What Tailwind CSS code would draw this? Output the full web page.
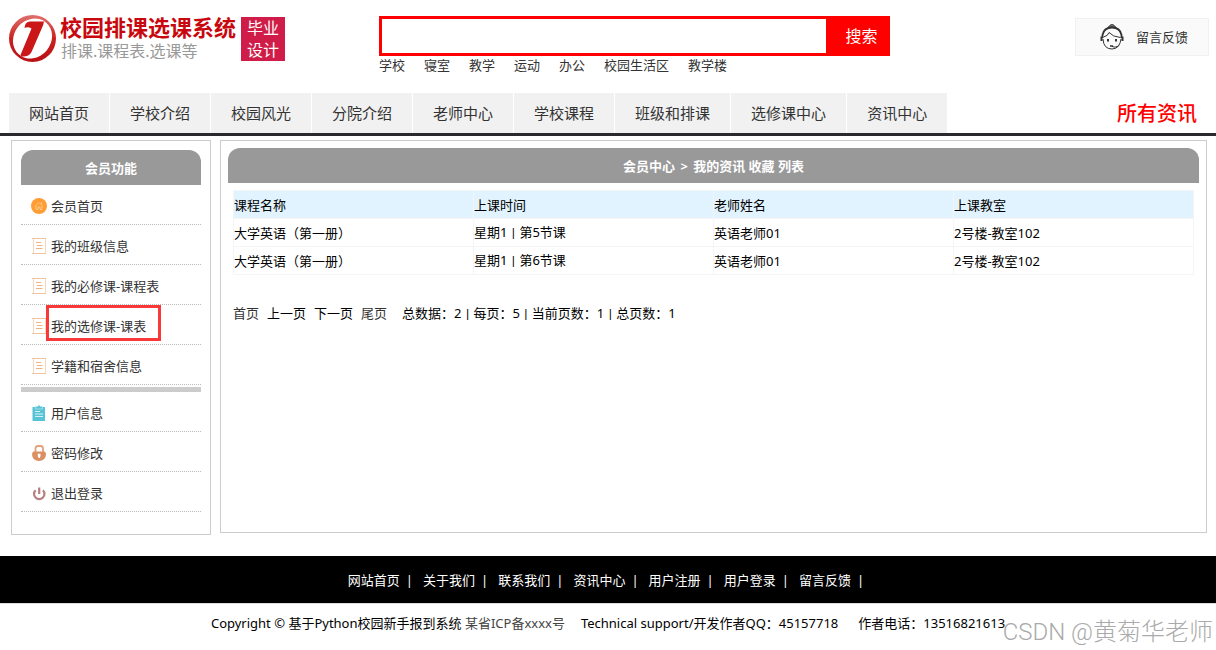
<!DOCTYPE html>
<html lang="zh-CN">
<head>
  <meta charset="UTF-8" />
  <meta name="viewport" content="width=device-width, initial-scale=1" />
  <title>校园排课选课系统 - 会员中心</title>
  <script src="https://cdn.jsdelivr.net/npm/@tailwindcss/browser@4"></script>
  <style>
    body {
      font-family: 'Noto Sans', 'Noto Sans CJK SC', sans-serif;
    }
  </style>
</head>
<body class="relative min-h-screen bg-white text-[13px] leading-5 text-black">
  <!-- Shared sidebar icon -->
  <svg class="hidden">
    <symbol id="icon-list" viewBox="0 0 16 16">
      <path d="M2.500 1V15M14.500 1V15" stroke="#f8d8ba" fill="none" />
      <path d="M1 .5H15M1 15.500H15" stroke="#efc49c" fill="none" />
      <path d="M5 4.500H10M6 7.500H11.500M5 10.500H11.500" stroke="#efb27e" fill="none" />
    </symbol>
  </svg>

  <header>
    <div class="flex h-[93px] items-start pl-[9px] pr-[7px]">
      <a href="#" class="mt-[14px] flex w-[370px] shrink-0" aria-label="校园排课选课系统">
        <svg class="mt-px h-12 w-12" viewBox="0 0 48 48">
          <defs>
            <linearGradient id="ring" x1="0" y1="0" x2="0" y2="1">
              <stop offset="0" stop-color="#e0706c" />
              <stop offset=".5" stop-color="#c9211f" />
              <stop offset="1" stop-color="#b91014" />
            </linearGradient>
          </defs>
          <circle cx="23.500" cy="23.500" r="23.500" fill="url(#ring)" />
          <ellipse cx="23.500" cy="23.500" rx="21" ry="18.500" transform="rotate(-50 23.500 23.500)" fill="#fff" />
          <path d="M15.500 13Q16 6.500 21 6.500H35Q34.500 10 32.500 14L22.500 37Q20 42 12.500 41.500L11.500 40L22.500 13.500Q19 11.500 15.500 13Z" fill="#cc1719" />
        </svg>
        <span class="ml-[3px] block">
          <span class="block text-[22px] font-bold leading-[26px] text-[#c8080e]">校园排课选课系统</span>
          <span class="block pl-px text-base leading-[22px] text-[#999]">排课.课程表.选课等</span>
        </span>
        <span class="ml-[5px] mt-[3px] h-11 w-11 bg-[#d01c48] text-center text-base leading-[22px] text-white">毕业<br />设计</span>
      </a>
      <div class="mt-4 w-[511px]">
        <form class="flex h-10">
          <input type="text" aria-label="搜索" class="min-w-0 flex-1 border-[3px] border-[#f00] px-2 outline-none" />
          <button type="button" class="w-[61px] bg-[#f00] pl-1 text-base text-white">搜索</button>
        </form>
        <nav class="flex gap-[19px] leading-[18px] text-[#333]">
          <a href="#">学校</a>
          <a href="#">寝室</a>
          <a href="#">教学</a>
          <a href="#">运动</a>
          <a href="#">办公</a>
          <a href="#">校园生活区</a>
          <a href="#">教学楼</a>
        </nav>
      </div>
      <a href="#" class="ml-auto mt-[18px] flex h-[38px] w-[134px] items-center border border-[#f1f1f1] bg-[#fafafa] pl-6 text-[#333]">
        <svg class="mr-3 h-[26px] w-6" viewBox="0 0 24 26" fill="none" stroke="#333">
          <path d="M8 3.500Q12 -2.500 16 3.500Q12 2 8 3.500Z" fill="#888" />
          <path d="M2.500 14V11Q4 3.500 12 3.500T21.500 11V14" stroke-width="1.800" />
          <path d="M3 15Q3.500 25 12 25Q16 25 18.500 22M21 15Q20.500 19 18.500 22Q15 24 12 22.500" />
          <path d="M3.500 13Q8 12 9 8.500Q13 13 20.500 13.500" />
          <path d="M1.500 12.500V17M22.500 12.500V17" stroke-width="2" />
          <path d="M8 15V17.500M16 15V17.500" stroke-width="2" />
          <path d="M10 22H13" stroke-width="1.500" />
        </svg>
        留言反馈
      </a>
    </div>
    <div class="flex h-[43px] justify-between border-b-[3px] border-[#2a2a2c] pl-[9px] pr-[19px]">
      <nav class="flex gap-px text-[15px] leading-10 text-[#333]">
        <a href="#" class="bg-[#f1f1f1] px-5">网站首页</a>
        <a href="#" class="bg-[#f1f1f1] px-5">学校介绍</a>
        <a href="#" class="bg-[#f1f1f1] px-5">校园风光</a>
        <a href="#" class="bg-[#f1f1f1] px-5">分院介绍</a>
        <a href="#" class="bg-[#f1f1f1] px-5">老师中心</a>
        <a href="#" class="bg-[#f1f1f1] px-5">学校课程</a>
        <a href="#" class="bg-[#f1f1f1] px-5">班级和排课</a>
        <a href="#" class="bg-[#f1f1f1] px-5">选修课中心</a>
        <a href="#" class="bg-[#f1f1f1] px-5">资讯中心</a>
      </nav>
      <a href="#" class="text-xl font-medium leading-[42px] text-[#f00]">所有资讯</a>
    </div>
  </header>

  <main class="flex items-start gap-[9px] pb-[21px] pl-[11px] pr-[9px] pt-1">
    <aside class="w-[200px] shrink-0 border border-[#ccc] px-[9px] pb-[22px] pt-[9px]">
      <h2 class="h-[35px] rounded-t-xl bg-[#999] text-center font-bold leading-9 text-white">会员功能</h2>
      <ul class="text-[#333]">
        <li class="h-10 border-b border-dotted border-[#bbb]">
          <a href="#" class="flex h-full items-center gap-1 pl-[10px] pt-0.5">
            <svg class="h-4 w-4" viewBox="0 0 16 16">
              <circle cx="8" cy="8" r="8" fill="#ff9c33" />
              <path d="M4 8.500L8 4.500L11.500 8M5 8V11.500H7V9H9V11.500H11V8M10.500 4V6" fill="none" stroke="#ffc888" />
            </svg>
            会员首页
          </a>
        </li>
        <li class="h-10 border-b border-dotted border-[#bbb]">
          <a href="#" class="flex h-full items-center gap-1 pl-[10px] pt-0.5">
            <svg class="h-4 w-4"><use href="#icon-list" /></svg>
            我的班级信息
          </a>
        </li>
        <li class="h-10 border-b border-dotted border-[#bbb]">
          <a href="#" class="flex h-full items-center gap-1 pl-[10px] pt-0.5">
            <svg class="h-4 w-4"><use href="#icon-list" /></svg>
            我的必修课-课程表
          </a>
        </li>
        <li class="relative h-10 border-b border-dotted border-[#bbb]">
          <a href="#" class="flex h-full items-center gap-1 pl-[10px] pt-0.5">
            <svg class="h-4 w-4"><use href="#icon-list" /></svg>
            我的选修课-课表
          </a>
          <span class="pointer-events-none absolute left-[25px] top-0 h-9 w-[115px] border-[3px] border-[#f93939]"></span>
        </li>
        <li class="h-10 border-b border-dotted border-[#bbb]">
          <a href="#" class="flex h-full items-center gap-1 pl-[10px] pt-0.5">
            <svg class="h-4 w-4"><use href="#icon-list" /></svg>
            学籍和宿舍信息
          </a>
        </li>
      </ul>
      <ul class="mt-0.5 border-t-[5px] border-[#ccc] text-[#333]">
        <li class="h-10 border-b border-dotted border-[#bbb]">
          <a href="#" class="flex h-full items-center gap-1 pl-[10px] pt-0.5">
            <svg class="h-4 w-4" viewBox="0 0 16 16">
              <path d="M1.500 2H14V16H1.500Z" fill="#56c3d6" />
              <path d="M4.500 4V1.500H6.500Q8 -1 9.500 1.500H11.500V4Z" fill="#56c3d6" stroke="#bfe8ef" stroke-width=".7" />
              <path d="M4 6.500H9M4 9H12M4 11.500H12" stroke="#d5f1f5" fill="none" />
            </svg>
            用户信息
          </a>
        </li>
        <li class="h-10 border-b border-dotted border-[#bbb]">
          <a href="#" class="flex h-full items-center gap-1 pl-[10px] pt-0.5">
            <svg class="h-4 w-4" viewBox="0 0 16 16">
              <path d="M4.500 8V3.500Q4.500 1 7 1H9.500Q12 1 12 3.500V8" fill="none" stroke="#e2a27c" stroke-width="1.800" />
              <path d="M2.500 6.500H13.500Q15 7 15 9.500Q14.500 16 8 16T1 9.500Q1 7 2.500 6.500Z" fill="#dd8f64" />
              <path d="M6.800 8.800H9.500V11L8.800 13H7.600L6.800 11Z" fill="#fff" />
            </svg>
            密码修改
          </a>
        </li>
        <li class="h-10 border-b border-dotted border-[#bbb]">
          <a href="#" class="flex h-full items-center gap-1 pl-[10px] pt-0.5">
            <svg class="h-4 w-4" viewBox="0 0 16 16" fill="none" stroke="#b57f80" stroke-width="2.200">
              <path d="M4.600 5.200A5.200 5.200 0 1 0 11.900 5.200M8.200 2.500V9" />
            </svg>
            退出登录
          </a>
        </li>
      </ul>
    </aside>

    <section class="min-h-[393px] min-w-0 flex-1 border border-[#ccc] p-[7px]">
      <h1 class="h-[35px] rounded-t-xl bg-[#999] text-center font-bold leading-9 text-white">会员中心 <span class="px-0.5">&gt;</span> 我的资讯 收藏 列表</h1>
      <div class="px-[5px] pt-[7px]">
        <table class="w-full table-fixed border-collapse text-left">
          <thead>
            <tr class="h-7 bg-[#e1f3ff]">
              <th class="border border-[#f5f5f5] p-0 font-normal">课程名称</th>
              <th class="border border-[#f5f5f5] p-0 font-normal">上课时间</th>
              <th class="border border-[#f5f5f5] p-0 font-normal">老师姓名</th>
              <th class="border border-[#f5f5f5] p-0 font-normal">上课教室</th>
            </tr>
          </thead>
          <tbody>
            <tr class="h-7">
              <td class="border border-[#f5f5f5] p-0">大学英语（第一册）</td>
              <td class="border border-[#f5f5f5] p-0">星期1 <span class="px-px font-[Roboto]">|</span> 第5节课</td>
              <td class="border border-[#f5f5f5] p-0">英语老师01</td>
              <td class="border border-[#f5f5f5] p-0">2号楼-教室102</td>
            </tr>
            <tr class="h-7">
              <td class="border border-[#f5f5f5] p-0">大学英语（第一册）</td>
              <td class="border border-[#f5f5f5] p-0">星期1 <span class="px-px font-[Roboto]">|</span> 第6节课</td>
              <td class="border border-[#f5f5f5] p-0">英语老师01</td>
              <td class="border border-[#f5f5f5] p-0">2号楼-教室102</td>
            </tr>
          </tbody>
        </table>
        <div class="mt-7 flex gap-2">
          <a href="#" class="text-[#333]">首页</a>
          <span>上一页</span>
          <span>下一页</span>
          <a href="#" class="text-[#333]">尾页</a>
          <span class="ml-[7px]">总数据：2 <span class="px-px font-[Roboto]">|</span> 每页：5 <span class="px-px font-[Roboto]">|</span> 当前页数：1 <span class="px-px font-[Roboto]">|</span> 总页数：1</span>
        </div>
      </div>
    </section>
  </main>

  <footer>
    <nav class="flex h-[47px] items-center justify-center gap-[10px] bg-black pr-1 text-white">
      <span class="flex gap-1.5"><a href="#">网站首页</a>|</span>
      <span class="flex gap-1.5"><a href="#">关于我们</a>|</span>
      <span class="flex gap-1.5"><a href="#">联系我们</a>|</span>
      <span class="flex gap-1.5"><a href="#">资讯中心</a>|</span>
      <span class="flex gap-1.5"><a href="#">用户注册</a>|</span>
      <span class="flex gap-1.5"><a href="#">用户登录</a>|</span>
      <span class="flex gap-1.5"><a href="#">留言反馈</a>|</span>
    </nav>
    <p class="flex justify-center border-t border-[#ddd] pt-[9px]">
      <span>Copyright © 基于Python校园新手报到系统 <a href="#" class="text-[#444]">某省ICP备xxxx号</a></span>
      <span class="ml-4">Technical support/开发作者QQ：45157718</span>
      <span class="ml-5">作者电话：13516821613</span>
    </p>
  </footer>

  <div class="pointer-events-none absolute bottom-0.5 right-[3px] font-['Roboto','Noto_Sans_CJK_SC',sans-serif] text-2xl font-light leading-8 text-[#aaa]">CSDN @黄菊华老师</div>
</body>
</html>
